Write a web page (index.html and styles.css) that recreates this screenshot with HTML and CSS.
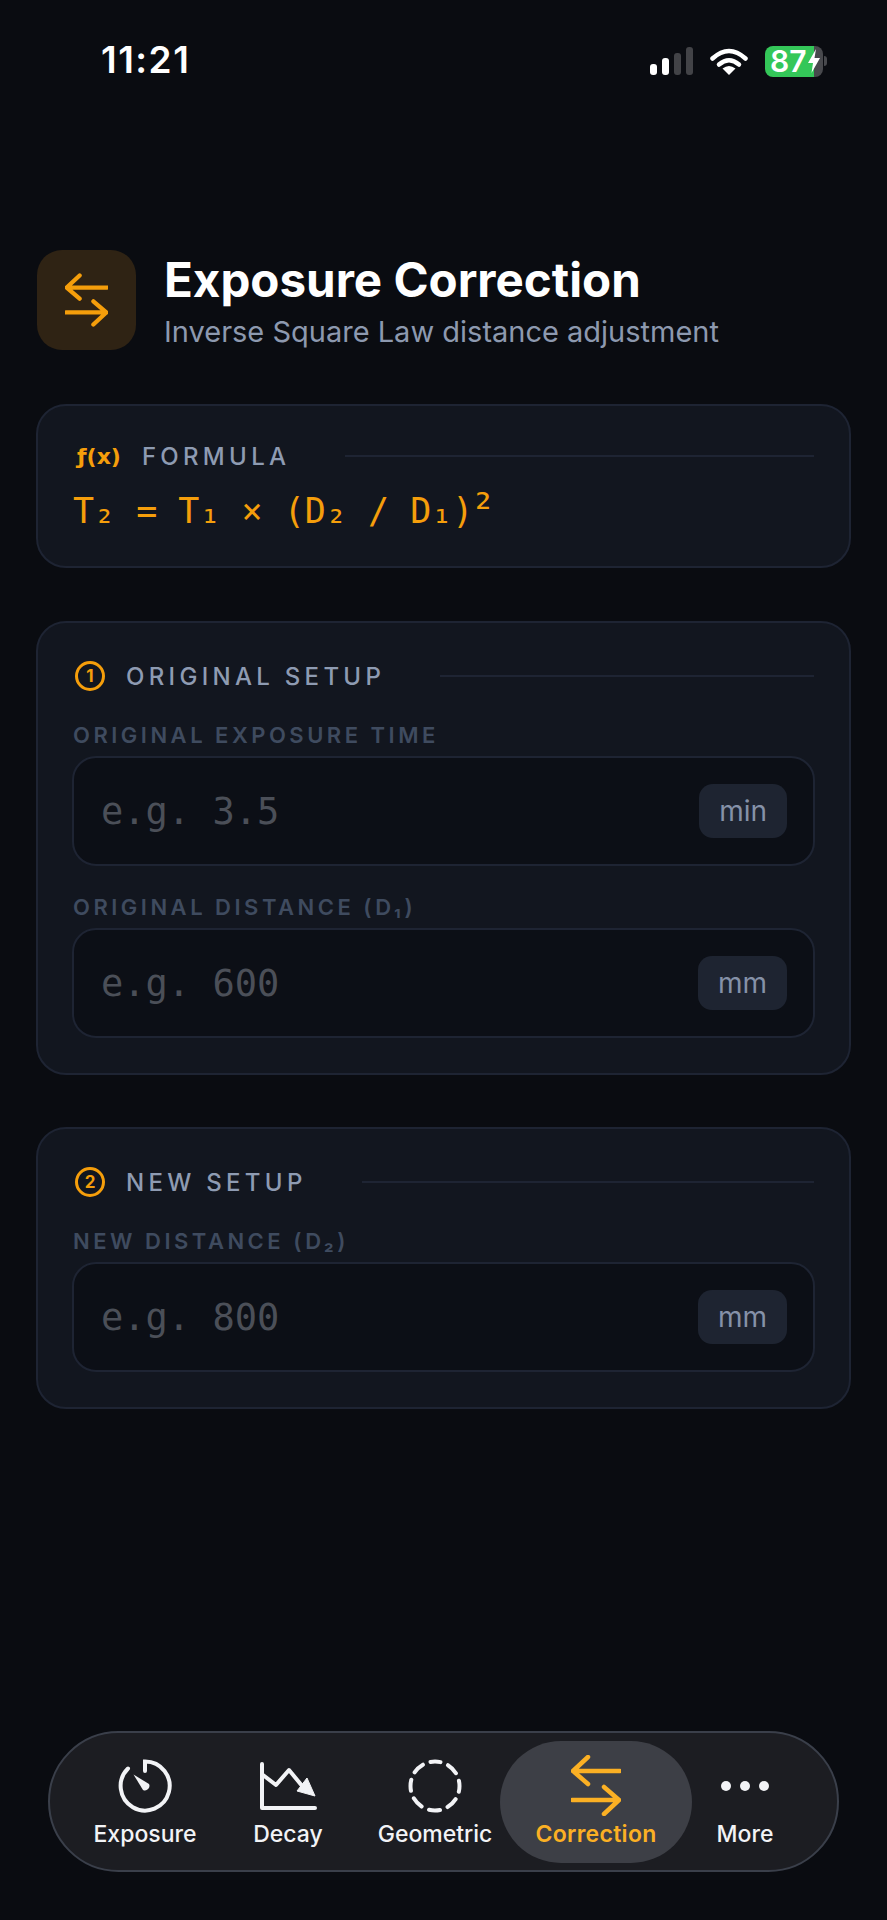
FILE: index.html
```html
<!DOCTYPE html>
<html lang="en">
<head>
  <meta charset="utf-8">
  <title>Exposure Correction</title>
  <link rel="stylesheet" href="styles.css">
</head>
<body>
  <div class="screen">
    <div class="status-bar">
      <span class="clock">11:21</span>
      <div class="status-icons">
        <div class="signal">
          <i class="bar bar-1"></i>
          <i class="bar bar-2"></i>
          <i class="bar bar-3"></i>
          <i class="bar bar-4"></i>
        </div>
        <svg class="wifi" viewBox="0 0 38 27">
          <path d="M2.5 10.5Q19-4.5 35.500 10.500" fill="none" stroke="#fff" stroke-width="4.500" stroke-linecap="round"/>
          <path d="M9 16.500Q19 8 29 16.500" fill="none" stroke="#fff" stroke-width="4.500" stroke-linecap="round"/>
          <path d="M19 27L12.500 20.500Q19 15.500 25.500 20.500Z" fill="#fff"/>
        </svg>
        <div class="battery">
          <div class="battery-body">
            <span class="battery-num">87</span>
            <svg class="bolt" viewBox="0 0 12 24"><path d="M8 0L0 14H5L3.500 24L12 9H6.500Z" fill="#fff"/></svg>
          </div>
          <i class="battery-nub"></i>
        </div>
      </div>
    </div>

    <header class="page-head">
      <div class="head-icon">
        <svg class="swap-small" viewBox="0 0 50 61">
          <path d="M49 16H2M17 2L2 16L17 29M1 45H48M33 32L48 45L33 59" fill="none" stroke="#f59e0b" stroke-width="5" stroke-linecap="round" stroke-linejoin="round"/>
        </svg>
      </div>
      <div class="head-text">
        <h1>Exposure Correction</h1>
        <p>Inverse Square Law distance adjustment</p>
      </div>
    </header>

    <section class="card formula-card">
      <div class="card-head">
        <span class="fx">ƒ(x)</span>
        <span class="card-title formula-title">FORMULA</span>
        <span class="rule"></span>
      </div>
      <div class="formula">T₂ = T₁ × (D₂ / D₁)<span class="squared">²</span></div>
    </section>

    <section class="card">
      <div class="card-head">
        <span class="step">1</span>
        <span class="card-title">ORIGINAL SETUP</span>
        <span class="rule"></span>
      </div>
      <div class="field-label">ORIGINAL EXPOSURE TIME</div>
      <div class="field">
        <span class="placeholder">e.g. 3.5</span>
        <span class="unit">min</span>
      </div>
      <div class="field-label">ORIGINAL DISTANCE (D₁)</div>
      <div class="field">
        <span class="placeholder">e.g. 600</span>
        <span class="unit">mm</span>
      </div>
    </section>

    <section class="card">
      <div class="card-head">
        <span class="step">2</span>
        <span class="card-title">NEW SETUP</span>
        <span class="rule"></span>
      </div>
      <div class="field-label">NEW DISTANCE (D₂)</div>
      <div class="field">
        <span class="placeholder">e.g. 800</span>
        <span class="unit">mm</span>
      </div>
    </section>

    <nav class="tabbar">
      <div class="tab">
        <div class="tab-icon">
          <svg width="54" height="54" viewBox="0 0 54 54">
            <path d="M27 12V2.500A24.500 24.500 0 1 1 10 9.500" fill="none" stroke="#f2f3f6" stroke-width="4" stroke-linecap="round"/>
            <path d="M15.500 15.500L31 25A4.500 4.500 0 0 1 25 31Z" fill="#f2f3f6"/>
          </svg>
        </div>
        <span class="tab-label">Exposure</span>
      </div>
      <div class="tab">
        <div class="tab-icon">
          <svg width="57" height="48" viewBox="0 0 57 48">
            <path d="M2 2V46H55" fill="none" stroke="#f2f3f6" stroke-width="4" stroke-linecap="round" stroke-linejoin="round"/>
            <path d="M3 13L16 23L29 8L43 25" fill="none" stroke="#f2f3f6" stroke-width="4" stroke-linecap="round" stroke-linejoin="round"/>
            <path d="M55 34L47 16L37 29Z" fill="#f2f3f6" stroke="#f2f3f6" stroke-width="1" stroke-linejoin="round"/>
          </svg>
        </div>
        <span class="tab-label">Decay</span>
      </div>
      <div class="tab">
        <div class="tab-icon">
          <svg width="54" height="54" viewBox="0 0 54 54">
            <circle cx="27" cy="27" r="24.500" fill="none" stroke="#f2f3f6" stroke-width="4" stroke-dasharray="11.240 8" stroke-dashoffset="5.620" stroke-linecap="round" transform="rotate(-90 27 27)"/>
          </svg>
        </div>
        <span class="tab-label">Geometric</span>
      </div>
      <div class="tab tab-active">
        <div class="tab-icon">
          <svg width="50" height="61" viewBox="0 0 50 61">
            <path d="M49 16H2M17 2L2 16L17 29M1 45H48M33 32L48 45L33 59" fill="none" stroke="#fbb024" stroke-width="4.500" stroke-linecap="round" stroke-linejoin="round"/>
          </svg>
        </div>
        <span class="tab-label">Correction</span>
      </div>
      <div class="tab">
        <div class="tab-icon">
          <svg width="48" height="10" viewBox="0 0 48 10">
            <circle cx="5" cy="5" r="5" fill="#f2f3f6"/>
            <circle cx="24" cy="5" r="5" fill="#f2f3f6"/>
            <circle cx="43" cy="5" r="5" fill="#f2f3f6"/>
          </svg>
        </div>
        <span class="tab-label">More</span>
      </div>
    </nav>
  </div>
</body>
</html>
```

FILE: styles.css
```css
* {
  box-sizing: border-box;
}
body {
  margin: 0;
  background: #0a0c11;
  color: #fff;
  font-family: Inter, "Liberation Sans", sans-serif;
}
.screen {
  display: flex;
  flex-direction: column;
  height: 1920px;
  padding: 0 36px;
}

/* status bar */
.status-bar {
  display: flex;
  justify-content: space-between;
  align-items: center;
  height: 43px;
  margin-top: 38px;
  padding-left: 65px;
  padding-right: 24px;
}
.clock {
  font-size: 37px;
  font-weight: 600;
  letter-spacing: 1.500px;
}
.status-icons {
  display: flex;
  align-items: center;
  gap: 17px;
  margin-top: 3px;
}
.signal {
  display: flex;
  align-items: flex-end;
  gap: 5px;
  height: 28px;
}
.bar {
  display: block;
  width: 7px;
  border-radius: 3px;
  background: #fff;
}
.bar-1 { height: 11px; }
.bar-2 { height: 17px; }
.bar-3 { height: 22px; background: #424347; }
.bar-4 { height: 28px; background: #424347; }
.wifi {
  width: 38px;
  height: 27px;
}
.battery {
  display: flex;
  align-items: center;
  gap: 1px;
}
.battery-body {
  display: flex;
  align-items: center;
  gap: 1px;
  width: 58px;
  height: 31px;
  padding-left: 5px;
  border-radius: 8px;
  background: linear-gradient(90deg, #34c759 84%, #48494d 84%);
}
.battery-num {
  font-size: 30px;
  font-weight: 600;
  line-height: 1;
}
.bolt {
  width: 12px;
  height: 24px;
}
.battery-nub {
  display: block;
  width: 3px;
  height: 10px;
  border-radius: 0 3px 3px 0;
  background: #48494d;
}

/* page title */
.page-head {
  display: flex;
  align-items: center;
  gap: 28px;
  margin-top: 169px;
  margin-bottom: 54px;
  padding-left: 1px;
}
.head-icon {
  display: flex;
  align-items: center;
  justify-content: center;
  width: 99px;
  height: 100px;
  border-radius: 25px;
  background: #2f2314;
}
.swap-small {
  width: 43px;
  height: 54px;
}
.head-text {
  padding-top: 2px;
}
.head-text h1 {
  margin: 0;
  font-size: 47.500px;
  font-weight: 700;
  line-height: 56px;
}
.head-text p {
  margin: 6px 0 0;
  font-size: 29px;
  line-height: 36px;
  color: #8d99af;
}

/* cards */
.card {
  margin-bottom: 52px;
  padding: 37px 34px 35px;
  border: 2px solid #1e2433;
  border-radius: 30px;
  background: #12161f;
}
.formula-card {
  height: 164px;
  margin-bottom: 53px;
  padding-top: 34px;
}
.card-head {
  display: flex;
  align-items: center;
  height: 32px;
}
.card-title {
  margin-left: 21px;
  font-size: 24px;
  font-weight: 500;
  letter-spacing: 4.300px;
  color: #8e9bb2;
}
.formula-title {
  margin-left: 21px;
}
.rule {
  flex: 1;
  height: 2px;
  margin-left: 55px;
  margin-right: 1px;
  background: #1e2433;
}
.fx {
  margin-left: 5px;
  font-family: "DejaVu Sans", sans-serif;
  font-size: 22px;
  font-weight: 700;
  color: #f59e0b;
}
.formula {
  margin-top: 17px;
  margin-left: 1px;
  font-family: "DejaVu Sans Mono", monospace;
  font-size: 35px;
  line-height: 44px;
  color: #f59e0b;
}
.squared {
  margin-left: -3px;
  font-size: 42px;
  line-height: 0;
}
.step {
  display: flex;
  align-items: center;
  justify-content: center;
  width: 30px;
  height: 30px;
  margin-left: 3px;
  border: 3px solid #f59e0b;
  border-radius: 50%;
  font-size: 17px;
  font-weight: 700;
  color: #f59e0b;
}

/* inputs */
.field-label {
  margin-top: 30px;
  margin-bottom: 8px;
  padding-left: 1px;
  font-size: 22px;
  font-weight: 600;
  line-height: 26px;
  letter-spacing: 3.500px;
  color: #3f4b5f;
}
.field-label + .field + .field-label {
  margin-top: 28px;
}
.field {
  display: flex;
  justify-content: space-between;
  align-items: center;
  height: 110px;
  padding: 0 26px 0 27px;
  border: 2px solid #1e2433;
  border-radius: 24px;
  background: #0c0f16;
}
.placeholder {
  font-family: "DejaVu Sans Mono", monospace;
  font-size: 37px;
  color: #4b4f58;
}
.unit {
  display: flex;
  align-items: center;
  height: 54px;
  padding: 0 20px;
  border-radius: 14px;
  background: #1e2431;
  font-size: 28px;
  color: #8591a8;
}

/* bottom tabs */
.tabbar {
  display: grid;
  grid-template-columns: 122px 164px 130px 192px 106px;
  align-items: center;
  height: 141px;
  margin: auto 12px 48px;
  padding-left: 34px;
  border: 2px solid #3a3f4a;
  border-radius: 71px;
  background: #1c1d22;
}
.tab {
  display: flex;
  flex-direction: column;
  align-items: center;
  justify-content: flex-end;
  height: 122px;
  padding-bottom: 15px;
  color: #f2f3f6;
}
.tab-icon {
  display: flex;
  align-items: center;
  justify-content: center;
  height: 60px;
  margin-bottom: 4px;
}
.tab-label {
  font-size: 23px;
  font-weight: 500;
  line-height: 28px;
  white-space: nowrap;
}
.tab-active {
  border-radius: 61px;
  background: #3d3f46;
  color: #fbb024;
}
.tab-active .tab-label {
  font-weight: 600;
  letter-spacing: 0.300px;
}
```
